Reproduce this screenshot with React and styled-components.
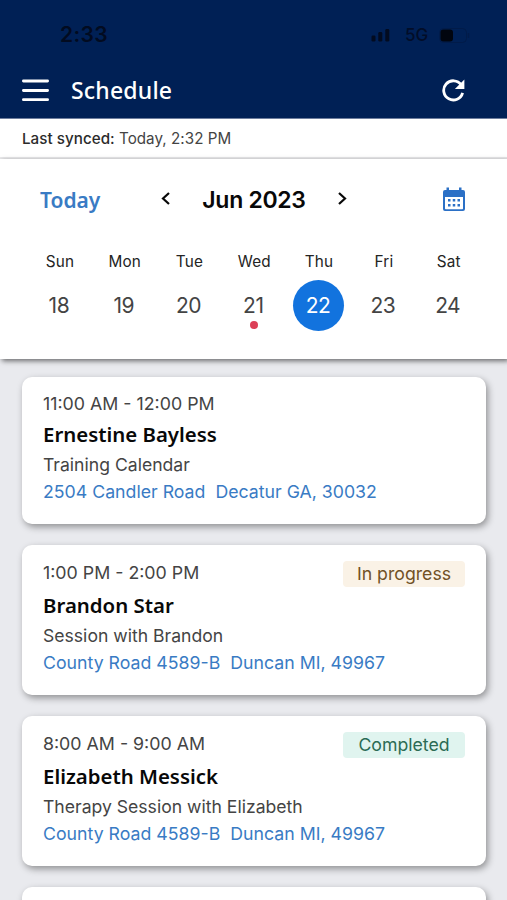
import React from "react";
import styled, { createGlobalStyle } from "styled-components";

const GlobalStyle = createGlobalStyle`
  * { box-sizing: border-box; }
  html, body { margin: 0; height: 100%; overflow: hidden; background: #e9eaee; }
  #root { height: 100%; }
`;

const body = `"Inter", sans-serif`;
const heading = `"Noto Sans", sans-serif`;

const Screen = styled.div`
  display: flex;
  flex-direction: column;
  width: 507px;
  height: 900px;
  overflow: hidden;
  background: #e9eaee;
  font-family: ${body};
`;

const Header = styled.header`
  flex: none;
  height: 119px;
  background: #002055;
  border-bottom: 1px solid #6d7d9d;
`;

const StatusBar = styled.div`
  display: flex;
  align-items: center;
  justify-content: space-between;
  height: 68px;
  padding: 1px 36px 0 60px;
  color: #020b20;
`;

const Clock = styled.span`
  font-size: 21px;
  font-weight: 600;
  letter-spacing: 0.4px;
`;

const StatusIcons = styled.div`
  display: flex;
  align-items: center;
  padding-top: 1px;
  svg { display: block; }
`;

const Network = styled.span`
  width: 34px;
  margin-left: 14px;
  font-size: 17px;
  font-weight: 500;
  color: #020d28;
`;

const AppBar = styled.div`
  display: flex;
  align-items: center;
  height: 44px;
  padding: 0 42px 0 22px;
  color: #fff;
  svg { display: block; }
`;

const Title = styled.h1`
  flex: 1;
  margin: 0 0 0 22px;
  font: 500 23px/44px ${heading};
  letter-spacing: 0.2px;
`;

const SyncBar = styled.div`
  flex: none;
  height: 40px;
  padding-left: 22px;
  border-bottom: 2px solid #e8e8ea;
  background: #fff;
  color: #444;
  font-size: 15.2px;
  line-height: 39px;
  letter-spacing: 0.03px;
  white-space: pre;
`;

const SyncLabel = styled.span`
  color: #2b2b2b;
  font-weight: 500;
`;

const Calendar = styled.section`
  flex: none;
  height: 200px;
  background: #fff;
  box-shadow: 2px 2px 5px rgba(0, 0, 0, 0.55);
`;

const MonthBar = styled.div`
  display: grid;
  grid-template-columns: 116px 20px 156px 20px 1fr;
  align-items: center;
  height: 80px;
  padding: 0 41px 0 40px;
  svg { display: block; justify-self: center; }
  svg:last-child { justify-self: end; }
`;

const TodayLink = styled.span`
  padding-top: 1px;
  color: #397bc4;
  font: 600 21px/30px ${heading};
`;

const Month = styled.h2`
  margin: 0;
  padding-top: 1px;
  text-align: center;
  color: #080808;
  font-size: 23px;
  font-weight: 600;
  line-height: 30px;
  letter-spacing: -0.3px;
`;

const Week = styled.div`
  display: grid;
  grid-template-columns: repeat(7, 64.8px);
  padding-left: 27px;
`;

const Day = styled.div`
  display: flex;
  flex-direction: column;
  align-items: center;
`;

const DayName = styled.span`
  height: 41px;
  padding-left: 1px;
  color: #242424;
  font-size: 15.3px;
  line-height: 45px;
  letter-spacing: 0.2px;
`;

const DayNumber = styled.span`
  position: relative;
  width: 51px;
  height: 51px;
  padding-right: 1px;
  border-radius: 50%;
  background: ${(p) => (p.$selected ? "#1273de" : "transparent")};
  color: ${(p) => (p.$selected ? "#fff" : "#444")};
  font-size: 21px;
  line-height: 51px;
  text-align: center;
  letter-spacing: -0.5px;
`;

const Dot = styled.i`
  position: absolute;
  left: 22px;
  bottom: 2px;
  width: 8px;
  height: 8px;
  border-radius: 50%;
  background: #dc3f57;
`;

const List = styled.main`
  display: flex;
  flex-direction: column;
  gap: 21px;
  padding: 18px 21px 0 22px;
`;

const Card = styled.article`
  flex: none;
  height: ${(p) => (p.$tall ? 150 : 147)}px;
  padding: 14px 21px 0;
  border-radius: 10px;
  background: #fff;
  box-shadow: 2px 3px 7px rgba(0, 0, 0, 0.38);
`;

const CardTop = styled.div`
  display: flex;
  align-items: center;
  justify-content: space-between;
  height: ${(p) => (p.$tall ? 29 : 26)}px;
`;

const Time = styled.span`
  color: #444;
  font-size: 17.8px;
  line-height: 24px;
  margin-top: -1px;
`;

const Badge = styled.span`
  width: 122px;
  height: 26px;
  border-radius: 4px;
  background: ${(p) => (p.$done ? "#e0f4ef" : "#faf2e6")};
  color: ${(p) => (p.$done ? "#2b6b54" : "#715126")};
  font-size: 17.7px;
  line-height: 26px;
  text-align: center;
`;

const Name = styled.h3`
  margin: 0;
  color: #080808;
  font: 600 20.4px/35px ${heading};
`;

const Detail = styled.div`
  height: 26px;
  color: #444;
  font-size: 17.6px;
  line-height: 26px;
`;

const Address = styled.div`
  height: 29px;
  color: #397bc4;
  font-size: 17.73px;
  line-height: 28px;
  white-space: pre;
`;

const days = [
  ["Sun", 18], ["Mon", 19], ["Tue", 20], ["Wed", 21],
  ["Thu", 22], ["Fri", 23], ["Sat", 24],
];

const sessions = [
  { time: "11:00 AM - 12:00 PM", name: "Ernestine Bayless", detail: "Training Calendar", address: "2504 Candler Road  Decatur GA, 30032" },
  { time: "1:00 PM - 2:00 PM", name: "Brandon Star", detail: "Session with Brandon", address: "County Road 4589-B  Duncan MI, 49967", status: "In progress" },
  { time: "8:00 AM - 9:00 AM", name: "Elizabeth Messick", detail: "Therapy Session with Elizabeth", address: "County Road 4589-B  Duncan MI, 49967", status: "Completed" },
];

const Signal = () => (
  <svg width="20" height="14" viewBox="0 0 20 14" fill="#020b20">
    <rect x="0.5" y="7.5" width="4" height="6" rx="1.3" />
    <rect x="7.3" y="4" width="4" height="9.5" rx="1.3" />
    <rect x="14.3" y="1" width="4" height="12.5" rx="1.3" />
  </svg>
);

const Battery = () => (
  <svg width="32" height="15" viewBox="0 0 32 15">
    <rect x="0.5" y="0.5" width="27" height="14" rx="4" fill="none" stroke="#011b49" />
    <rect x="1.5" y="1.5" width="12.5" height="12" rx="3" fill="#01050f" />
    <path d="M29.5 5v5" stroke="#011b49" strokeWidth="1.5" />
  </svg>
);

const MenuIcon = () => (
  <svg width="27" height="24" viewBox="0 0 27 24" stroke="#fff" strokeWidth="2.8" strokeLinecap="round">
    <path d="M1.4 3h24.2M1.4 12.5h24.2M1.4 21.7h24.2" />
  </svg>
);

const RefreshIcon = () => (
  <svg width="23" height="24" viewBox="0 0 23 24" fill="none">
    <path d="M19.2 6.9A9.6 9.6 0 1 0 20.6 14.8" stroke="#fff" strokeWidth="2.8" />
    <path d="M22.4 1.4V10.9H12.9z" fill="#fff" />
  </svg>
);

const Chevron = ({ next }) => (
  <svg width="14" height="16" viewBox="0 0 14 16" fill="none" stroke="#080808" strokeWidth="2.2">
    <path d={next ? "M4 2l6 5.5L4 13" : "M10 2L4 7.5l6 5.5"} />
  </svg>
);

const CalendarIcon = () => (
  <svg width="24" height="26" viewBox="0 0 24 26">
    <path
      fill="#2b70c6"
      fillRule="evenodd"
      d="M4.5 1.5h2.5V4h10V1.500h2.500V4H21a2 2 0 0 1 2 2v17a2 2 0 0 1-2 2H3a2 2 0 0 1-2-2V6a2 2 0 0 1 2-2h1.500zM3 11v11.500q0 .7.7.7h16.600q.7 0 .7-.7V11z"
    />
    <path
      fill="#2b70c6"
      d="M6 13h2.500v2.500H6zM10.750 13h2.500v2.500h-2.500zM15.500 13h2.500v2.500h-2.500zM6 18h2.500v2.500H6zM10.750 18h2.500v2.500h-2.500zM15.500 18h2.500v2.500h-2.500z"
    />
  </svg>
);

const Session = ({ time, name, detail, address, status }) => (
  <Card $tall={!!status}>
    <CardTop $tall={!!status}>
      <Time>{time}</Time>
      {status && <Badge $done={status === "Completed"}>{status}</Badge>}
    </CardTop>
    <Name>{name}</Name>
    <Detail>{detail}</Detail>
    <Address>{address}</Address>
  </Card>
);

export default function App() {
  return (
    <>
      <GlobalStyle />
      <Screen>
        <Header>
          <StatusBar>
            <Clock>2:33</Clock>
            <StatusIcons>
              <Signal />
              <Network>5G</Network>
              <Battery />
            </StatusIcons>
          </StatusBar>
          <AppBar>
            <MenuIcon />
            <Title>Schedule</Title>
            <RefreshIcon />
          </AppBar>
        </Header>
        <SyncBar>
          <SyncLabel>Last synced:</SyncLabel> Today, 2:32 PM
        </SyncBar>
        <Calendar>
          <MonthBar>
            <TodayLink>Today</TodayLink>
            <Chevron />
            <Month>Jun 2023</Month>
            <Chevron next />
            <CalendarIcon />
          </MonthBar>
          <Week>
            {days.map(([name, number]) => (
              <Day key={name}>
                <DayName>{name}</DayName>
                <DayNumber $selected={number === 22}>
                  {number}
                  {number === 21 && <Dot />}
                </DayNumber>
              </Day>
            ))}
          </Week>
        </Calendar>
        <List>
          {sessions.map((s) => (
            <Session key={s.name} {...s} />
          ))}
          <Card $tall />
        </List>
      </Screen>
    </>
  );
}
